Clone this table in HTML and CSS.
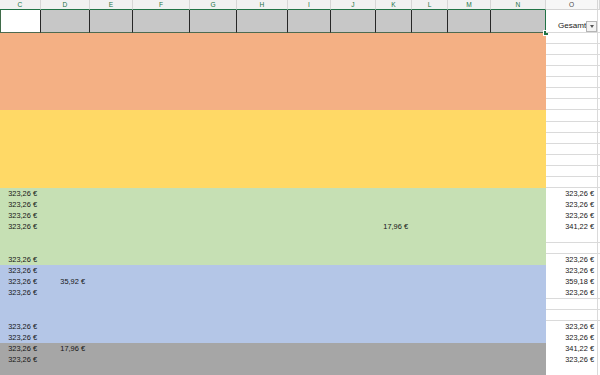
FILE: index.html
```html
<!DOCTYPE html>
<html lang="de">
<head>
<meta charset="utf-8">
<title>Tabelle</title>
<link rel="stylesheet" href="styles.css">
</head>
<body>
<div class="sheet">
  <div class="cols hdr">
    <div>C</div><div>D</div><div>E</div><div>F</div><div>G</div><div>H</div><div>I</div><div>J</div><div>K</div><div>L</div><div>M</div><div>N</div><div class="ho">O</div><div class="hp"></div>
  </div>
  <div class="cols row2">
    <div class="sel first"></div><div class="sel"></div><div class="sel"></div><div class="sel"></div><div class="sel"></div><div class="sel"></div><div class="sel"></div><div class="sel"></div><div class="sel"></div><div class="sel"></div><div class="sel"></div><div class="sel last"><span class="handle"></span></div>
    <div class="o2"><span class="gtext">Gesamt</span><span class="fbtn"><span class="tri"></span></span></div><div class="p2"></div>
  </div>

  <div class="block orange">
    <div class="cols r"><div class="o"></div><div class="p"></div></div>
    <div class="cols r"><div class="o"></div><div class="p"></div></div>
    <div class="cols r"><div class="o"></div><div class="p"></div></div>
    <div class="cols r"><div class="o"></div><div class="p"></div></div>
    <div class="cols r"><div class="o"></div><div class="p"></div></div>
    <div class="cols r"><div class="o"></div><div class="p"></div></div>
    <div class="cols r"><div class="o"></div><div class="p"></div></div>
  </div>

  <div class="block yellow">
    <div class="cols r"><div class="o"></div><div class="p"></div></div>
    <div class="cols r"><div class="o"></div><div class="p"></div></div>
    <div class="cols r"><div class="o"></div><div class="p"></div></div>
    <div class="cols r"><div class="o"></div><div class="p"></div></div>
    <div class="cols r"><div class="o"></div><div class="p"></div></div>
    <div class="cols r"><div class="o"></div><div class="p"></div></div>
    <div class="cols r"><div class="o"></div><div class="p"></div></div>
  </div>

  <div class="block green">
    <div class="cols r"><div class="c">323,26 €</div><div class="o">323,26 €</div><div class="p"></div></div>
    <div class="cols r"><div class="c">323,26 €</div><div class="o">323,26 €</div><div class="p"></div></div>
    <div class="cols r"><div class="c">323,26 €</div><div class="o">323,26 €</div><div class="p"></div></div>
    <div class="cols r"><div class="c">323,26 €</div><div class="k">17,96 €</div><div class="o">341,22 €</div><div class="p"></div></div>
    <div class="cols r"><div class="o"></div><div class="p"></div></div>
    <div class="cols r"><div class="o"></div><div class="p"></div></div>
    <div class="cols r"><div class="c">323,26 €</div><div class="o">323,26 €</div><div class="p"></div></div>
  </div>

  <div class="block blue">
    <div class="cols r"><div class="c">323,26 €</div><div class="o">323,26 €</div><div class="p"></div></div>
    <div class="cols r"><div class="c">323,26 €</div><div class="d">35,92 €</div><div class="o">359,18 €</div><div class="p"></div></div>
    <div class="cols r"><div class="c">323,26 €</div><div class="o">323,26 €</div><div class="p"></div></div>
    <div class="cols r"><div class="o"></div><div class="p"></div></div>
    <div class="cols r"><div class="o"></div><div class="p"></div></div>
    <div class="cols r"><div class="c">323,26 €</div><div class="o">323,26 €</div><div class="p"></div></div>
    <div class="cols r"><div class="c">323,26 €</div><div class="o">323,26 €</div><div class="p"></div></div>
  </div>

  <div class="block gray">
    <div class="cols r"><div class="c">323,26 €</div><div class="d">17,96 €</div><div class="o">341,22 €</div><div class="p"></div></div>
    <div class="cols r"><div class="c">323,26 €</div><div class="o">323,26 €</div><div class="p"></div></div>
    <div class="cols r"><div class="o"></div><div class="p"></div></div>
    <div class="cols r"><div class="o"></div><div class="p"></div></div>
  </div>
</div>
</body>
</html>
```

FILE: styles.css
```css
* { box-sizing: border-box; }
html, body { margin: 0; padding: 0; }
body {
  width: 600px;
  height: 375px;
  overflow: hidden;
  background: #ffffff;
  font-family: "Liberation Sans", Arial, sans-serif;
  color: #151515;
}
.sheet { width: 600px; }

.cols {
  display: grid;
  grid-template-columns: 41px 49px 43px 57px 47px 51px 43px 45px 36px 36px 43px 55px 52px 1fr;
}

/* column headers */
.hdr { height: 10px; }
.hdr div {
  font-size: 6.6px;
  line-height: 9px;
  text-align: center;
  color: #217346;
  background: #f1f1f1;
  border-right: 1px solid #d6d6d6;
  border-bottom: 1px solid #217346;
}
.hdr .ho {
  color: #4a4a4a;
  background: #f7f7f7;
  border-bottom-color: #d4d4d4;
}
.hdr .hp {
  background: #f7f7f7;
  border-bottom-color: #d4d4d4;
}

/* row 2 */
.row2 { height: 23px; }
.row2 .sel {
  background: #c7c7c7;
  border-right: 1px solid #262626;
  border-bottom: 1px solid #4d6a50;
}
.row2 .first {
  background: #ffffff;
  border-left: 1px solid #3f6b49;
}
.row2 .last {
  position: relative;
  border-right: 1px solid #217346;
}
.handle {
  position: absolute;
  right: -3px;
  bottom: -3px;
  width: 4px;
  height: 4px;
  background: #217346;
  border: 1px solid #ffffff;
  box-sizing: content-box;
  margin: -1px;
}
.o2 {
  position: relative;
  display: flex;
  align-items: flex-end;
  padding-left: 12px;
  padding-bottom: 1px;
  background: #ffffff;
  border-right: 1px solid #d9d9d9;
  border-bottom: 1px solid #d9d9d9;
  overflow: hidden;
}
.gtext {
  white-space: nowrap;
  font-size: 8.1px;
  line-height: 10px;
  color: #222;
}
.fbtn {
  position: absolute;
  right: 0;
  bottom: 0;
  width: 11px;
  height: 11px;
  border: 1px solid #b5b5b5;
  background: #f3f3f3;
  display: flex;
  align-items: center;
  justify-content: center;
}
.tri {
  width: 0;
  height: 0;
  border-left: 2.5px solid transparent;
  border-right: 2.5px solid transparent;
  border-top: 3px solid #555;
}
.p2 {
  background: #ffffff;
  border-bottom: 1px solid #d9d9d9;
}

/* body rows */
.block.orange { background: #f4b084; }
.block.yellow { background: #ffd966; }
.block.green  { background: #c6e0b4; }
.block.blue   { background: #b4c6e7; }
.block.gray   { background: #a6a6a6; }

.r { height: 11.0714px; }
.r div {
  font-size: 7.4px;
  line-height: 11px;
  white-space: nowrap;
  text-align: right;
  padding-right: 4px;
}
.r .c { grid-column: 1; }
.r .d { grid-column: 2; padding-right: 5px; }
.r .k { grid-column: 9; }
.r .o {
  grid-column: 13;
  background: #ffffff;
  border-right: 1px solid #dadada;
  border-bottom: 1px solid #dadada;
  padding-right: 3px;
}
.r .p {
  grid-column: 14;
  background: #ffffff;
  border-bottom: 1px solid #dadada;
}
```
